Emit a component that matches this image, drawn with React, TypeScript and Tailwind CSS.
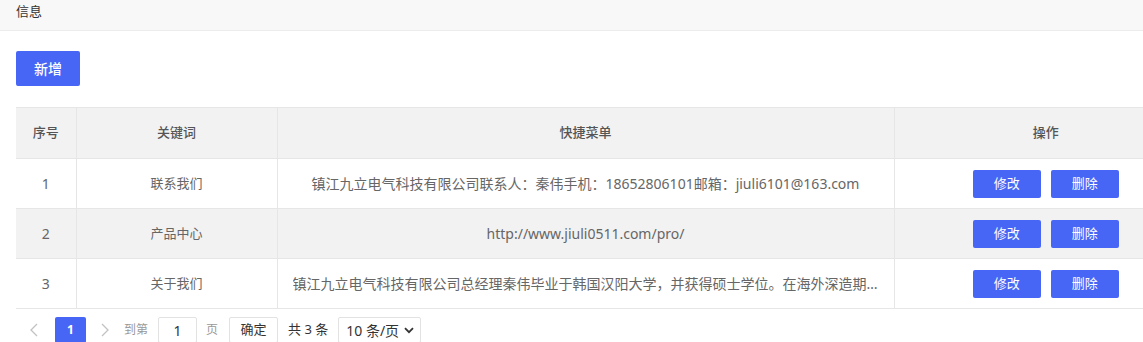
import React from 'react';

const rows = [
  { id: 1, keyword: '联系我们', menu: '镇江九立电气科技有限公司联系人：秦伟手机：18652806101邮箱：jiuli6101@163.com' },
  { id: 2, keyword: '产品中心', menu: 'http://www.jiuli0511.com/pro/' },
  { id: 3, keyword: '关于我们', menu: '镇江九立电气科技有限公司总经理秦伟毕业于韩国汉阳大学，并获得硕士学位。在海外深造期间，他系统学习了先进的电气技术与企业管理知识，回国后创立了本公司。' },
];

const App: React.FC = () => {
  return (
    <div className="w-[1143px] h-[342px] overflow-hidden bg-white text-[#666] font-['Noto_Sans','Noto_Sans_CJK_SC',sans-serif]">
      {/* Title bar */}
      <div className="h-[31px] bg-[#f8f8f8] border-b border-[#ececec] px-4 text-[13px] leading-[22px] text-[#333]">信息</div>

      <div className="pl-4">
        <button className="mt-5 h-[35px] w-16 rounded-[2px] bg-[#4766f5] text-white text-[14px] font-medium">新增</button>

        {/* Table */}
        <table className="mt-[21px] w-[1182px] table-fixed border-collapse text-[14px]">
          <colgroup>
            <col className="w-[60px]" />
            <col className="w-[201px]" />
            <col className="w-[617px]" />
            <col />
          </colgroup>
          <thead>
            <tr className="h-[51px] bg-[#f2f2f2] text-[13px] font-medium text-[#555]">
              <th className="border border-l-0 border-[#e6e6e6] font-medium">序号</th>
              <th className="border border-[#e6e6e6] font-medium">关键词</th>
              <th className="border border-[#e6e6e6] font-medium">快捷菜单</th>
              <th className="border border-[#e6e6e6] font-medium">操作</th>
            </tr>
          </thead>
          <tbody>
            {rows.map((r, i) => (
              <tr key={r.id} className={`h-[50px] ${i % 2 === 1 ? 'bg-[#f2f2f2]' : 'bg-white'}`}>
                <td className="border border-l-0 border-[#e6e6e6] text-center">{r.id}</td>
                <td className="border border-[#e6e6e6] text-center text-[13px]">{r.keyword}</td>
                <td className="border border-[#e6e6e6] px-[15px] text-center">
                  <div className="truncate">{r.menu}</div>
                </td>
                <td className="border border-[#e6e6e6]">
                  <div className="flex justify-center gap-[10px]">
                    <button className="h-7 w-[68px] rounded-[2px] bg-[#4766f5] text-white text-[13px]">修改</button>
                    <button className="h-7 w-[68px] rounded-[2px] bg-[#4766f5] text-white text-[13px]">删除</button>
                  </div>
                </td>
              </tr>
            ))}
          </tbody>
        </table>

        {/* Pagination */}
        <div className="mt-2 flex h-[26px] items-center text-[12px]">
          <span className="ml-[14px] w-[12px] text-[#c2c2c2]">
            <svg width="8" height="14" viewBox="0 0 8 14" fill="none" stroke="currentColor" strokeWidth="1.3"><path d="M7 1L1 7l6 6" /></svg>
          </span>
          <span className="ml-[13px] flex h-[26px] w-[31px] items-center justify-center rounded-[2px] bg-[#4766f5] text-white font-bold">1</span>
          <span className="ml-[15px] text-[#c2c2c2]">
            <svg width="8" height="14" viewBox="0 0 8 14" fill="none" stroke="currentColor" strokeWidth="1.3"><path d="M1 1l6 6-6 6" /></svg>
          </span>
          <span className="ml-[15px] text-[#999]">到第</span>
          <span className="ml-[10px] flex h-[26px] w-[39px] items-center justify-center rounded-[2px] border border-[#e2e2e2] text-[14px] text-[#333]">1</span>
          <span className="ml-[9px] text-[#999]">页</span>
          <span className="ml-[11px] flex h-[26px] w-[49px] items-center justify-center rounded-[2px] border border-[#e2e2e2] text-[13px] text-[#333]">确定</span>
          <span className="ml-[10px] text-[13px] text-[#333]">共 3 条</span>
          <span className="ml-[10px] flex h-[26px] w-[83px] items-center justify-between rounded-[2px] border border-[#e2e2e2] pl-[7px] pr-[6px] text-[14px] text-[#333]">
            10 条/页
            <svg width="10" height="7" viewBox="0 0 10 7" fill="none" stroke="currentColor" strokeWidth="1.8"><path d="M1 1.2l4 4 4-4" /></svg>
          </span>
        </div>
      </div>
    </div>
  );
};

export default App;
